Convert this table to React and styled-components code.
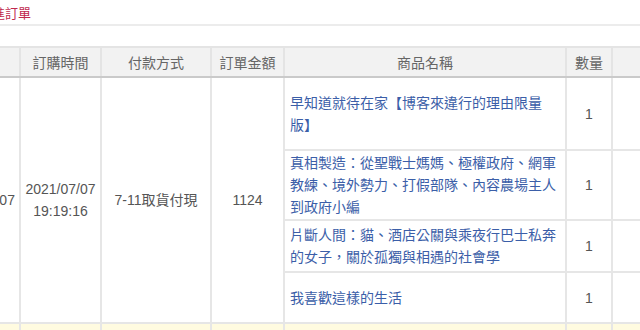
import styled, { createGlobalStyle } from "styled-components";

const GlobalStyle = createGlobalStyle`
  body {
    margin: 0;
    background: #fff;
    font-family: "Liberation Sans", "Noto Sans CJK TC", sans-serif;
  }
`;

const order = {
  no: "2021070707",
  date: "2021/07/07",
  time: "19:19:16",
  payment: "7-11取貨付現",
  total: "1124",
  items: [
    { name: "早知道就待在家【博客來違行的理由限量版】", qty: 1, height: 73 },
    {
      name: "真相製造：從聖戰士媽媽、極權政府、網軍教練、境外勢力、打假部隊、內容農場主人到政府小編",
      qty: 1,
      height: 70,
    },
    {
      name: "片斷人間：貓、酒店公關與乘夜行巴士私奔的女子，關於孤獨與相遇的社會學",
      qty: 1,
      height: 52,
    },
    { name: "我喜歡這樣的生活", qty: 1, height: 51 },
  ],
};

const App = () => {
  const [first, ...rest] = order.items;
  return (
    <Page>
      <GlobalStyle />
      <TabBar>
        <TabLink>新進訂單</TabLink>
      </TabBar>
      <TableWrap>
        <Table>
          <colgroup>
            <col style={{ width: "88px" }} />
            <col style={{ width: "81px" }} />
            <col style={{ width: "110px" }} />
            <col style={{ width: "73px" }} />
            <col style={{ width: "282px" }} />
            <col style={{ width: "46px" }} />
            <col style={{ width: "140px" }} />
          </colgroup>
          <thead>
            <tr>
              <Th>編號</Th>
              <Th>訂購時間</Th>
              <Th>付款方式</Th>
              <Th>訂單金額</Th>
              <Th>商品名稱</Th>
              <Th>數量</Th>
              <Th>小計</Th>
            </tr>
          </thead>
          <tbody>
            <Row $height={first.height}>
              <Td rowSpan={4}>{order.no}</Td>
              <Td rowSpan={4}>
                {order.date}
                <br />
                {order.time}
              </Td>
              <Td rowSpan={4}>{order.payment}</Td>
              <Td rowSpan={4}>{order.total}</Td>
              <NameCell>{first.name}</NameCell>
              <Td>{first.qty}</Td>
              <Td />
            </Row>
            {rest.map((item) => (
              <Row key={item.name} $height={item.height}>
                <NameCell>{item.name}</NameCell>
                <Td>{item.qty}</Td>
                <Td />
              </Row>
            ))}
            <Row $height={30} $highlight>
              <Td />
              <Td />
              <Td />
              <Td />
              <Td />
              <Td />
              <Td />
            </Row>
          </tbody>
        </Table>
      </TableWrap>
    </Page>
  );
};

const Page = styled.div`
  width: 640px;
  height: 330px;
  overflow: hidden;
`;

const TabBar = styled.div`
  height: 24px;
  border-bottom: 2px solid #ececec;
  margin-bottom: 20px;
  margin-left: -21px;
`;

const TabLink = styled.span`
  display: inline-block;
  padding-top: 6px;
  font-size: 13px;
  line-height: 16px;
  color: #c0284e;
`;

const TableWrap = styled.div`
  margin-left: -69px;
`;

const Table = styled.table`
  border-collapse: collapse;
  table-layout: fixed;
  width: 820px;
  font-size: 14px;
  color: #555;
`;

const Th = styled.th`
  height: 28px;
  background: #f2f2f2;
  border: 2px solid #e4e4e4;
  border-bottom: 2px solid #cacaca;
  font-weight: normal;
  color: #666;
  text-align: center;
  padding: 0 4px;
  white-space: nowrap;
`;

const Row = styled.tr`
  height: ${(p) => p.$height}px;
  background: ${(p) => (p.$highlight ? "#fffbe0" : "#fff")};
  border-top: ${(p) => (p.$highlight ? "2px solid #cbc3ad" : "none")};
`;

const Td = styled.td`
  border: 2px solid #e6e6e6;
  text-align: center;
  vertical-align: middle;
  line-height: 22px;
  padding: 0 4px;
`;

const NameCell = styled(Td)`
  text-align: left;
  color: #3b5ea8;
  padding: 0 5px;
`;

export default App;
